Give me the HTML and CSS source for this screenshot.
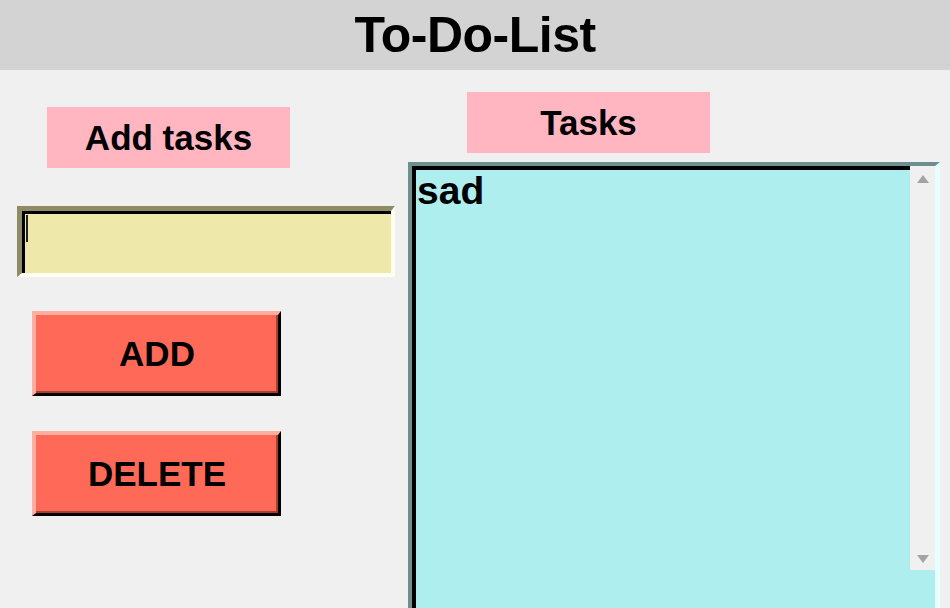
FILE: index.html
```html
<!DOCTYPE html>
<html lang="en">
<head>
<meta charset="utf-8">
<title>To-Do-List</title>
<link rel="stylesheet" href="styles.css">
</head>
<body>
  <header class="title-bar">
    <h1 class="title">To-Do-List</h1>
  </header>
  <main class="main">
    <section class="left-col">
      <div class="label label-add">Add tasks</div>
      <div class="entry"><span class="caret"></span></div>
      <button class="btn btn-add">ADD</button>
      <button class="btn btn-delete">DELETE</button>
    </section>
    <section class="right-col">
      <div class="label label-tasks">Tasks</div>
      <div class="listbox">
        <div class="list-item">sad</div>
        <div class="scrollbar">
          <span class="arrow arrow-up"></span>
          <span class="arrow arrow-down"></span>
        </div>
      </div>
    </section>
  </main>
</body>
</html>
```

FILE: styles.css
```css
html, body {
  margin: 0;
  padding: 0;
  height: 608px;
  overflow: hidden;
}

body {
  background: #f0f0f0;
  font-family: "Liberation Sans", Arial, sans-serif;
  color: #000;
}

.title-bar {
  height: 70px;
  background: #d3d3d3;
  display: flex;
  justify-content: center;
}

.title {
  margin: 0;
  font-size: 50px;
  line-height: 70px;
  font-weight: bold;
  letter-spacing: -0.5px;
}

.main {
  display: flex;
  align-items: flex-start;
}

.left-col {
  width: 408px;
  display: flex;
  flex-direction: column;
  align-items: flex-start;
  padding-top: 37px;
}

.label {
  width: 243px;
  height: 61px;
  background: #ffb6c1;
  display: flex;
  align-items: center;
  justify-content: center;
  font-size: 35px;
  font-weight: bold;
}

.label-add {
  margin-left: 47px;
}

.entry {
  box-sizing: border-box;
  width: 378px;
  height: 71px;
  margin-top: 38px;
  margin-left: 17px;
  background: #eee8aa;
  border-style: solid;
  border-width: 5px 4px 4px 5px;
  border-color: #8f8b66 #fffff0 #fffff0 #8f8b66;
  box-shadow: inset 3px 3px 0 #000;
  padding: 4px 0 0 4px;
}

.caret {
  display: block;
  width: 2px;
  height: 27px;
  background: #222;
}

.btn {
  box-sizing: border-box;
  width: 249px;
  height: 85px;
  margin-left: 32px;
  background: #ff6a58;
  border-style: solid;
  border-width: 4px 3px 3px 4px;
  border-color: #ffaea0 #000 #000 #ffaea0;
  box-shadow: inset -2px -2px 0 #a8402e;
  font-family: "Liberation Sans", Arial, sans-serif;
  font-size: 35px;
  font-weight: bold;
  color: #000;
  padding: 0;
}

.btn-add {
  margin-top: 34px;
}

.btn-delete {
  margin-top: 35px;
}

.right-col {
  flex: 1;
  display: flex;
  flex-direction: column;
  align-items: flex-start;
  padding-top: 22px;
}

.label-tasks {
  margin-left: 59px;
}

.listbox {
  position: relative;
  box-sizing: border-box;
  width: 532px;
  height: 470px;
  margin-top: 9px;
  background: #afeeee;
  border-style: solid;
  border-width: 4px 5px 4px 4px;
  border-color: #6d8f8f #e6ffff #e6ffff #6d8f8f;
  box-shadow: inset 4px 4px 0 #000;
  padding: 3px 0 0 5px;
}

.list-item {
  font-size: 39px;
  font-weight: bold;
  line-height: normal;
}

.scrollbar {
  position: absolute;
  top: 0;
  right: 0;
  width: 25px;
  height: 404px;
  background: #f0f0f0;
  display: flex;
  flex-direction: column;
  justify-content: space-between;
  align-items: center;
  padding: 9px 0 7px;
  box-sizing: border-box;
}

.arrow {
  width: 0;
  height: 0;
  border-left: 6px solid transparent;
  border-right: 6px solid transparent;
}

.arrow-up {
  border-bottom: 8px solid #a3a3a3;
}

.arrow-down {
  border-top: 8px solid #a3a3a3;
}
```
